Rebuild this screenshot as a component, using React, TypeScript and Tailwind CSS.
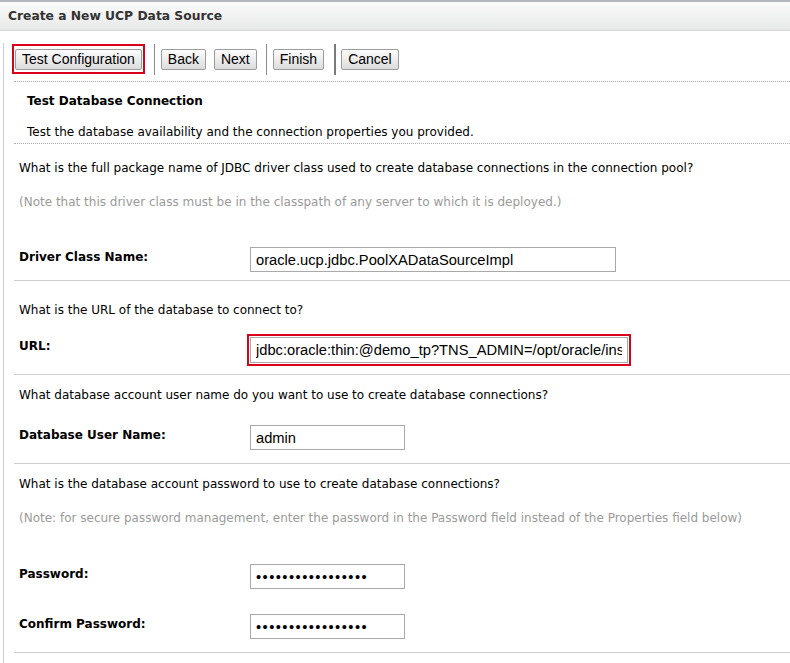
import React from "react";

const label = "w-[231px] shrink-0 pt-[2px] text-[12px] font-bold leading-4 text-black";
const question = "pl-[5px] text-[12px] leading-4 text-black";
const note = "pl-[5px] text-[12px] leading-4 text-[#9a9a9a]";
const box =
  "h-[25px] border border-[#a9a9a9] bg-white px-[5px] text-[14.7px] text-black outline-none [font-family:'Liberation_Sans',Arial,sans-serif]";

function Btn({ children }: { children: React.ReactNode }) {
  return (
    <button className="h-[21px] rounded-[2px] border border-[#9c9c9c] bg-gradient-to-b from-[#fdfdfd] to-[#dcdcdc] px-[6px] text-[14px] leading-none text-black [font-family:'Liberation_Sans',Arial,sans-serif]">
      {children}
    </button>
  );
}

function Sep({ thick }: { thick?: boolean }) {
  return <div className={thick ? "h-[31px] w-[2px] bg-[#7a7a7a]" : "h-[31px] w-px bg-[#8a8a8a]"} />;
}

export default function App() {
  return (
    <div className="h-[663px] w-[790px] overflow-hidden bg-white [font-family:'DejaVu_Sans',Tahoma,sans-serif]">
      <div className="flex h-[31px] items-center border-t-2 border-b border-t-[#b4b8bc] border-b-[#d6d8d8] bg-gradient-to-b from-[#fbfbfb] to-[#e7e8e8] pl-[8px] text-[12.3px] font-bold text-[#333]">
        Create a New UCP Data Source
      </div>
      <div className="ml-[3px] h-[640px] border-l border-[#c9cdd1]">
        {/* toolbar */}
        <div className="mt-[12px] ml-[8px] flex h-[32px] items-center">
          <div className="border-2 border-[#d9001b] p-px">
            <Btn>Test Configuration</Btn>
          </div>
          <div className="ml-[9px]">
            <Sep />
          </div>
          <div className="ml-[6px]">
            <Btn>Back</Btn>
          </div>
          <div className="ml-[8px]">
            <Btn>Next</Btn>
          </div>
          <div className="ml-[9px]">
            <Sep />
          </div>
          <div className="ml-[6px]">
            <Btn>Finish</Btn>
          </div>
          <div className="ml-[10px]">
            <Sep thick />
          </div>
          <div className="ml-[5px]">
            <Btn>Cancel</Btn>
          </div>
        </div>

        <div className="ml-[10px]">
          <div className="mt-[6px] border-t border-dotted border-[#b0b0b0]" />
          <div className="mt-[11px] pl-[13px] text-[12px] font-bold leading-4 text-black">Test Database Connection</div>
          <div className="mt-[15px] pl-[13px] text-[12px] leading-4 text-black">
            Test the database availability and the connection properties you provided.
          </div>
          <div className="mt-[3px] border-t border-dotted border-[#b0b0b0]" />

          {/* driver */}
          <div className={`mt-[16px] ${question}`}>
            What is the full package name of JDBC driver class used to create database connections in the connection pool?
          </div>
          <div className={`mt-[18px] ${note}`}>
            (Note that this driver class must be in the classpath of any server to which it is deployed.)
          </div>
          <div className="mt-[37px] flex items-start pl-[5px]">
            <div className={label}>Driver Class Name:</div>
            <input readOnly className={`${box} w-[366px]`} value="oracle.ucp.jdbc.PoolXADataSourceImpl" />
          </div>
          <div className="mt-[8px] border-t border-[#cfcfcf]" />

          {/* url */}
          <div className={`mt-[21px] ${question}`}>What is the URL of the database to connect to?</div>
          <div className="mt-[16px] flex items-start pl-[5px]">
            <div className={`${label} pt-[4px]`}>URL:</div>
            <div className="-ml-[3px] border-2 border-[#d9001b] p-px">
              <input
                readOnly
                className={`${box} h-[26px] w-[378px]`}
                value="jdbc:oracle:thin:@demo_tp?TNS_ADMIN=/opt/oracle/instantclient/network/admin"
              />
            </div>
          </div>
          <div className="mt-[8px] border-t border-[#cfcfcf]" />

          {/* user */}
          <div className={`mt-[12px] ${question}`}>
            What database account user name do you want to use to create database connections?
          </div>
          <div className="mt-[22px] flex items-start pl-[5px]">
            <div className={label}>Database User Name:</div>
            <input readOnly className={`${box} w-[155px]`} value="admin" />
          </div>
          <div className="mt-[13px] border-t border-[#cfcfcf]" />

          {/* password */}
          <div className={`mt-[12px] ${question}`}>
            What is the database account password to use to create database connections?
          </div>
          <div className={`mt-[18px] ${note}`}>
            (Note: for secure password management, enter the password in the Password field instead of the Properties field below)
          </div>
          <div className="mt-[38px] flex items-start pl-[5px]">
            <div className={label}>Password:</div>
            <input readOnly type="password" className={`${box} w-[155px] tracking-[1.45px]`} value="aaaaaaaaaaaaaaaaa" />
          </div>
          <div className="mt-[25px] flex items-start pl-[5px]">
            <div className={label}>Confirm Password:</div>
            <input readOnly type="password" className={`${box} w-[155px] tracking-[1.45px]`} value="aaaaaaaaaaaaaaaaa" />
          </div>
          <div className="mt-[13px] border-t border-[#cfcfcf]" />
        </div>
      </div>
    </div>
  );
}
